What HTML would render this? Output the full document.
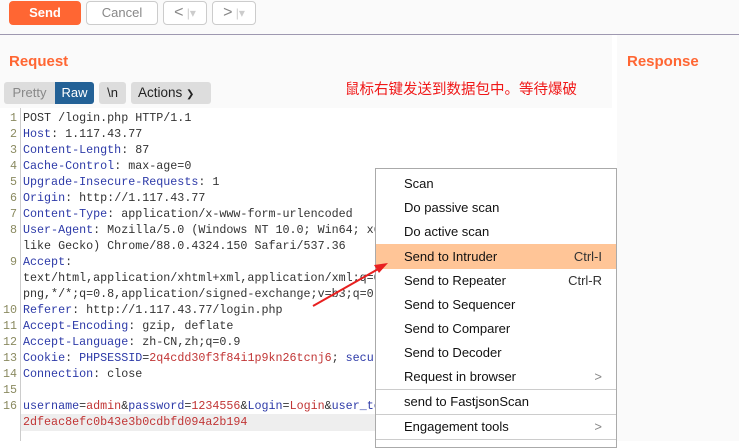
<!DOCTYPE html>
<html><head><meta charset="utf-8"><style>
*{margin:0;padding:0;box-sizing:border-box}
body{width:739px;height:441px;overflow:hidden;background:#fff;font-family:"Liberation Sans","Noto Sans CJK SC",sans-serif;position:relative}
.a{position:absolute}
.btn{position:absolute;border:1px solid #ccc;border-radius:4px;background:#fff;color:#888;font-size:13px;text-align:center}
.code{position:absolute;left:0;top:110px;font-family:"Liberation Mono","Noto Sans CJK SC",monospace;font-size:11.7px;line-height:16px;color:#333;letter-spacing:0}
.code div{height:16px;white-space:pre;position:relative;padding-left:23px}
.code .n{position:absolute;left:1px;width:16px;text-align:right;color:#8a8a60;font-style:normal}
.k{color:#2d3aa8}.v{color:#c13535}
.menu{position:absolute;left:375px;top:168px;width:242px;height:280px;background:#fff;border:1px solid #aaa;font-size:13px;color:#111}
.mi{height:24px;line-height:24px;padding-left:28px;position:relative}
.mi span{position:absolute;right:14px;color:#333}
.sep{border-top:1px solid #ccc}
</style></head><body>
<div class="a" style="left:0;top:0;width:739px;height:34px;background:#fafafa"></div>
<div class="a" style="left:0;top:34px;width:739px;height:1px;background:#9e98b0"></div>
<div class="a" style="left:0;top:35px;width:612px;height:73px;background:#fafafa"></div>
<div class="a" style="left:617px;top:35px;width:122px;height:406px;background:#fafafa"></div>
<div class="btn" style="left:9px;top:1px;width:72px;height:24px;background:#ff6633;border-color:#ff6633;color:#fff;font-weight:bold;line-height:22px">Send</div>
<div class="btn" style="left:86px;top:1px;width:72px;height:24px;line-height:22px">Cancel</div>
<div class="btn" style="left:163px;top:1px;width:44px;height:24px;line-height:22px;font-size:16px">&lt;<span style="color:#ccc;font-size:12px"> |▾</span></div>
<div class="btn" style="left:212px;top:1px;width:44px;height:24px;line-height:22px;font-size:16px">&gt;<span style="color:#ccc;font-size:12px"> |▾</span></div>
<div class="a" style="left:9px;top:53px;color:#ff6633;font-weight:bold;font-size:15px">Request</div>
<div class="a" style="left:627px;top:53px;color:#ff6633;font-weight:bold;font-size:15px">Response</div>
<div class="a" style="left:4px;top:82px;width:51px;height:22px;background:#ddd;color:#888;font-size:13px;line-height:22px;text-align:center;border-radius:3px 0 0 3px">Pretty</div>
<div class="a" style="left:55px;top:82px;width:39px;height:22px;background:#236196;color:#fff;font-size:13px;line-height:22px;text-align:center;border-radius:0 3px 3px 0">Raw</div>
<div class="a" style="left:99px;top:82px;width:27px;height:22px;background:#ddd;color:#222;font-size:13px;line-height:22px;text-align:center;border-radius:3px">\n</div>
<div class="a" style="left:131px;top:82px;width:80px;height:22px;background:#ddd;color:#222;font-size:13.5px;line-height:22px;padding-left:7px;border-radius:3px">Actions <span style="font-size:10px">❯</span></div>
<div class="a" style="left:345px;top:78px;color:#f01818;font-size:14.5px">鼠标右键发送到数据包中。等待爆破</div>
<div class="a" style="left:20px;top:108px;width:1px;height:333px;background:#ccc"></div>
<div class="a" style="left:21px;top:414px;width:355px;height:17px;background:#eee"></div>
<div class="code">
<div><i class="n">1</i>POST /login.php HTTP/1.1</div>
<div><i class="n">2</i><span class="k">Host</span>: 1.117.43.77</div>
<div><i class="n">3</i><span class="k">Content-Length</span>: 87</div>
<div><i class="n">4</i><span class="k">Cache-Control</span>: max-age=0</div>
<div><i class="n">5</i><span class="k">Upgrade-Insecure-Requests</span>: 1</div>
<div><i class="n">6</i><span class="k">Origin</span>: http://1.117.43.77</div>
<div><i class="n">7</i><span class="k">Content-Type</span>: application/x-www-form-urlencoded</div>
<div><i class="n">8</i><span class="k">User-Agent</span>: Mozilla/5.0 (Windows NT 10.0; Win64; x64</div>
<div>like Gecko) Chrome/88.0.4324.150 Safari/537.36</div>
<div><i class="n">9</i><span class="k">Accept</span>:</div>
<div>text/html,application/xhtml+xml,application/xml;q=0</div>
<div>png,*/*;q=0.8,application/signed-exchange;v=b3;q=0.</div>
<div><i class="n">10</i><span class="k">Referer</span>: http://1.117.43.77/login.php</div>
<div><i class="n">11</i><span class="k">Accept-Encoding</span>: gzip, deflate</div>
<div><i class="n">12</i><span class="k">Accept-Language</span>: zh-CN,zh;q=0.9</div>
<div><i class="n">13</i><span class="k">Cookie</span>: <span class="k">PHPSESSID</span>=<span class="v">2q4cdd30f3f84i1p9kn26tcnj6</span>; <span class="k">secur</span></div>
<div><i class="n">14</i><span class="k">Connection</span>: close</div>
<div><i class="n">15</i></div>
<div><i class="n">16</i><span class="k">username</span>=<span class="v">admin</span>&amp;<span class="k">password</span>=<span class="v">1234556</span>&amp;<span class="k">Login</span>=<span class="v">Login</span>&amp;<span class="k">user_te</span></div>
<div class="v">2dfeac8efc0b43e3b0cdbfd094a2b194</div>
</div>
<div class="menu">
<div style="height:3px"></div>
<div class="mi">Scan</div>
<div class="mi">Do passive scan</div>
<div class="mi">Do active scan</div>
<div class="mi" style="background:#ffc597;height:25px;line-height:25px">Send to Intruder<span>Ctrl-I</span></div>
<div class="mi">Send to Repeater<span>Ctrl-R</span></div>
<div class="mi">Send to Sequencer</div>
<div class="mi">Send to Comparer</div>
<div class="mi">Send to Decoder</div>
<div class="mi">Request in browser<span style="color:#888">&gt;</span></div>
<div class="sep"></div>
<div class="mi">send to FastjsonScan</div>
<div class="sep"></div>
<div class="mi">Engagement tools<span style="color:#888">&gt;</span></div>
<div class="sep"></div>
</div>
<svg class="a" style="left:0;top:0" width="739" height="441"><line x1="313" y1="306" x2="380" y2="268" stroke="#e82020" stroke-width="2"/><polygon points="388,263 374,265 379,273" fill="#e82020"/></svg>
</body></html>
